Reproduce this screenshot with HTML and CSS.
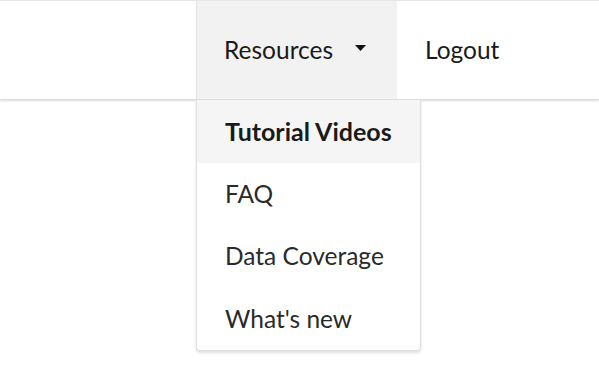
FILE: index.html
```html
<!DOCTYPE html>
<html>
<head>
    <meta content="width=device-width, initial-scale=1.0" name="viewport">
<link rel="stylesheet" href="styles.css">
</head>
<body>
    <div class="topbar">
        <div class="spacer"></div>
        <div class="nav-item dropdown">
            <span>Resources</span>
            <svg class="caret" width="11" height="6" viewBox="0 0 11 6"><path d="M0 0 L11 0 L5.5 6 Z" fill="#111"/></svg>
            <div class="menu">
                <div class="menu-item active">Tutorial Videos</div>
                <div class="menu-item">FAQ</div>
                <div class="menu-item">Data Coverage</div>
                <div class="menu-item">What's new</div>
            </div>
        </div>
        <div class="nav-item logout">Logout</div>
    </div>
</body>
</html>
```
FILE: styles.css
```css
body, html {
    margin: 0;
    padding: 0;
    width: 100%;
    height: 100%;
    overflow: hidden;
    background: #fff;
    font-family: Lato, "Open Sans", sans-serif;
    color: #1a1a1a;
}
.topbar {
    display: flex;
    height: 98px;
    border-top: 1px solid #e6e6e6;
    box-shadow: 0 1px 2px rgba(0, 0, 0, 0.15);
    border-bottom: 1px solid #dedede;
}
.spacer {
    width: 196px;
}
.nav-item {
    display: flex;
    align-items: center;
    font-size: 24.5px;
    box-sizing: border-box;
    padding-bottom: 2px;
}
.dropdown {
    position: relative;
    width: 201px;
    background: #f2f2f2;
    border-left: 1px solid #e2e2e2;
    padding-left: 27px;
}
.caret {
    margin-left: 22px;
    margin-top: -2px;
}
.logout {
    padding-left: 28px;
}
.menu {
    position: absolute;
    top: 99px;
    left: -1px;
    width: 223px;
    background: #fff;
    border: 1px solid #e0e0e0;
    border-top: none;
    border-radius: 0 0 4px 4px;
    box-shadow: 0 2px 3px rgba(0, 0, 0, 0.12);
}
.menu-item {
    height: 62.5px;
    display: flex;
    align-items: center;
    padding-left: 28px;
    padding-bottom: 1px;
    box-sizing: border-box;
    font-size: 24.5px;
    color: #2a2a2a;
}
.menu-item.active {
    background: #f5f5f5;
    font-weight: bold;
    font-size: 25px;
    color: #1a1a1a;
}
```
